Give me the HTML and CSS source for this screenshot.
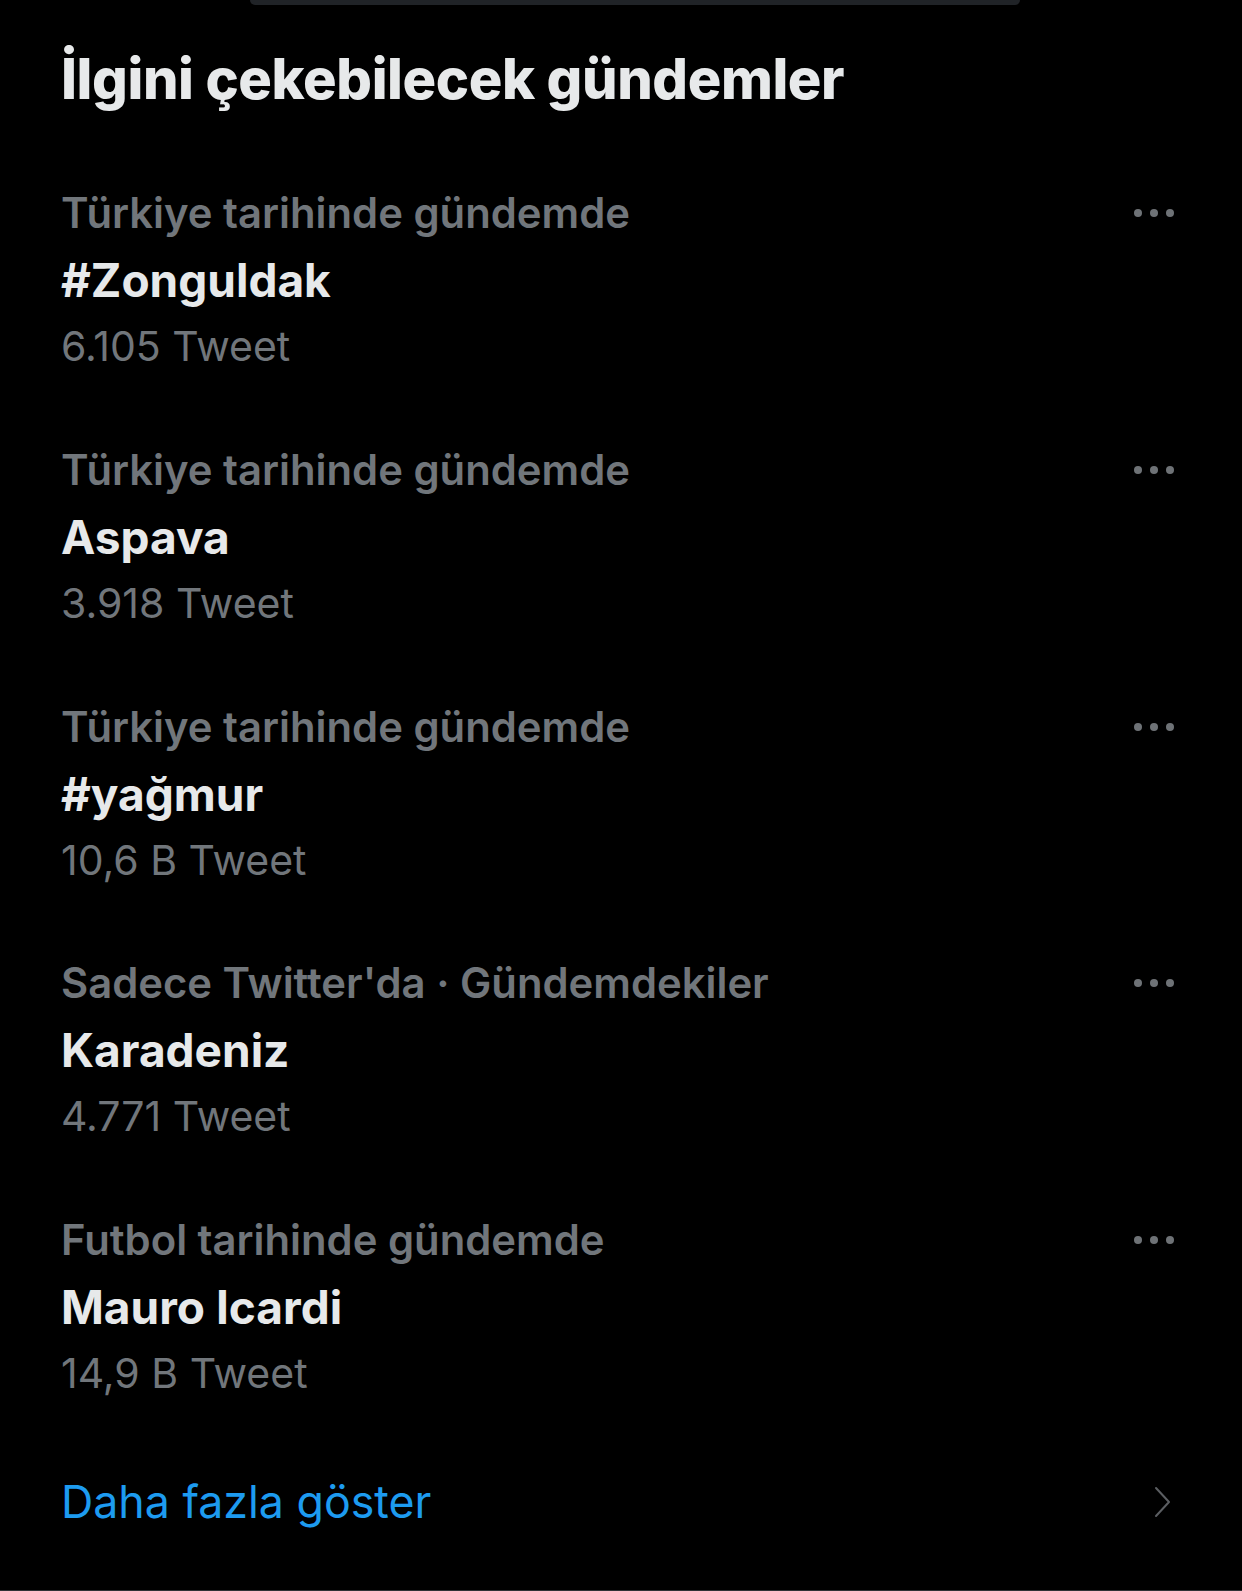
FILE: index.html
```html
<!DOCTYPE html>
<html lang="tr">
<head>
<meta charset="utf-8">
<title>İlgini çekebilecek gündemler</title>
<link rel="stylesheet" href="styles.css">
</head>
<body>
<div class="topbar"></div>
<main class="panel">
  <h1 class="heading">İlgini çekebilecek gündemler</h1>
  <ul class="trends">
    <li class="trend">
      <div class="trend-meta"><span>Türkiye tarihinde gündemde</span>
        <svg class="more" width="42" height="10" viewBox="0 0 42 10"><circle cx="5" cy="5" r="4"/><circle cx="21" cy="5" r="4"/><circle cx="37" cy="5" r="4"/></svg></div>
      <div class="trend-name">#Zonguldak</div>
      <div class="trend-count">6.105 Tweet</div>
    </li>
    <li class="trend">
      <div class="trend-meta"><span>Türkiye tarihinde gündemde</span>
        <svg class="more" width="42" height="10" viewBox="0 0 42 10"><circle cx="5" cy="5" r="4"/><circle cx="21" cy="5" r="4"/><circle cx="37" cy="5" r="4"/></svg></div>
      <div class="trend-name">Aspava</div>
      <div class="trend-count">3.918 Tweet</div>
    </li>
    <li class="trend">
      <div class="trend-meta"><span>Türkiye tarihinde gündemde</span>
        <svg class="more" width="42" height="10" viewBox="0 0 42 10"><circle cx="5" cy="5" r="4"/><circle cx="21" cy="5" r="4"/><circle cx="37" cy="5" r="4"/></svg></div>
      <div class="trend-name">#yağmur</div>
      <div class="trend-count">10,6 B Tweet</div>
    </li>
    <li class="trend">
      <div class="trend-meta"><span>Sadece Twitter'da · Gündemdekiler</span>
        <svg class="more" width="42" height="10" viewBox="0 0 42 10"><circle cx="5" cy="5" r="4"/><circle cx="21" cy="5" r="4"/><circle cx="37" cy="5" r="4"/></svg></div>
      <div class="trend-name">Karadeniz</div>
      <div class="trend-count">4.771 Tweet</div>
    </li>
    <li class="trend">
      <div class="trend-meta"><span>Futbol tarihinde gündemde</span>
        <svg class="more" width="42" height="10" viewBox="0 0 42 10"><circle cx="5" cy="5" r="4"/><circle cx="21" cy="5" r="4"/><circle cx="37" cy="5" r="4"/></svg></div>
      <div class="trend-name">Mauro Icardi</div>
      <div class="trend-count">14,9 B Tweet</div>
    </li>
  </ul>
  <a class="show-more" href="#"><span>Daha fazla göster</span>
    <svg class="chev" width="20" height="32" viewBox="0 0 20 32"><path d="M3 2 L16 16 L3 30" fill="none" stroke="#5b5e62" stroke-width="2" stroke-linecap="round" stroke-linejoin="round"/></svg></a>
</main>
</body>
</html>
```
FILE: styles.css
```css
html, body {
  margin: 0;
  padding: 0;
  background: #000;
}
body {
  width: 1242px;
  height: 1591px;
  overflow: hidden;
  font-family: Inter, "Noto Sans", "Liberation Sans", sans-serif;
  color: #e7e9ea;
}
.topbar {
  margin-left: 250px;
  width: 770px;
  height: 5px;
  background: #202327;
  border-radius: 0 0 6px 6px;
}
.panel {
  display: flex;
  flex-direction: column;
  height: 1585px;
  border-bottom: 1px solid #2f3336;
}
.heading {
  margin: 0;
  padding: 42px 0 0 61px;
  height: 175px;
  box-sizing: border-box;
  font-size: 56px;
  line-height: 64px;
  font-weight: 800;
  letter-spacing: -0.4px;
  color: #e7e9ea;
}
.trends {
  list-style: none;
  margin: 0;
  padding: 0;
}
.trend {
  padding: 0 67px 0 61px;
  height: 256.75px;
  box-sizing: border-box;
}
.trend-meta {
  display: flex;
  justify-content: space-between;
  align-items: center;
  height: 66px;
  font-size: 41.8px;
  font-weight: 600;
  color: #71767b;
}
.more {
  fill: #6e7276;
}
.trend-name {
  height: 68px;
  line-height: 68px;
  font-size: 46px;
  font-weight: 700;
  color: #e7e9ea;
}
.trend-count {
  height: 64px;
  line-height: 64px;
  font-size: 41px;
  font-weight: 400;
  color: #71767b;
}
.show-more {
  display: flex;
  justify-content: space-between;
  align-items: center;
  margin-top: 3px;
  padding: 0 69px 0 61px;
  height: 70px;
  text-decoration: none;
  font-size: 44.7px;
  font-weight: 400;
  color: #1d9bf0;
}
```
